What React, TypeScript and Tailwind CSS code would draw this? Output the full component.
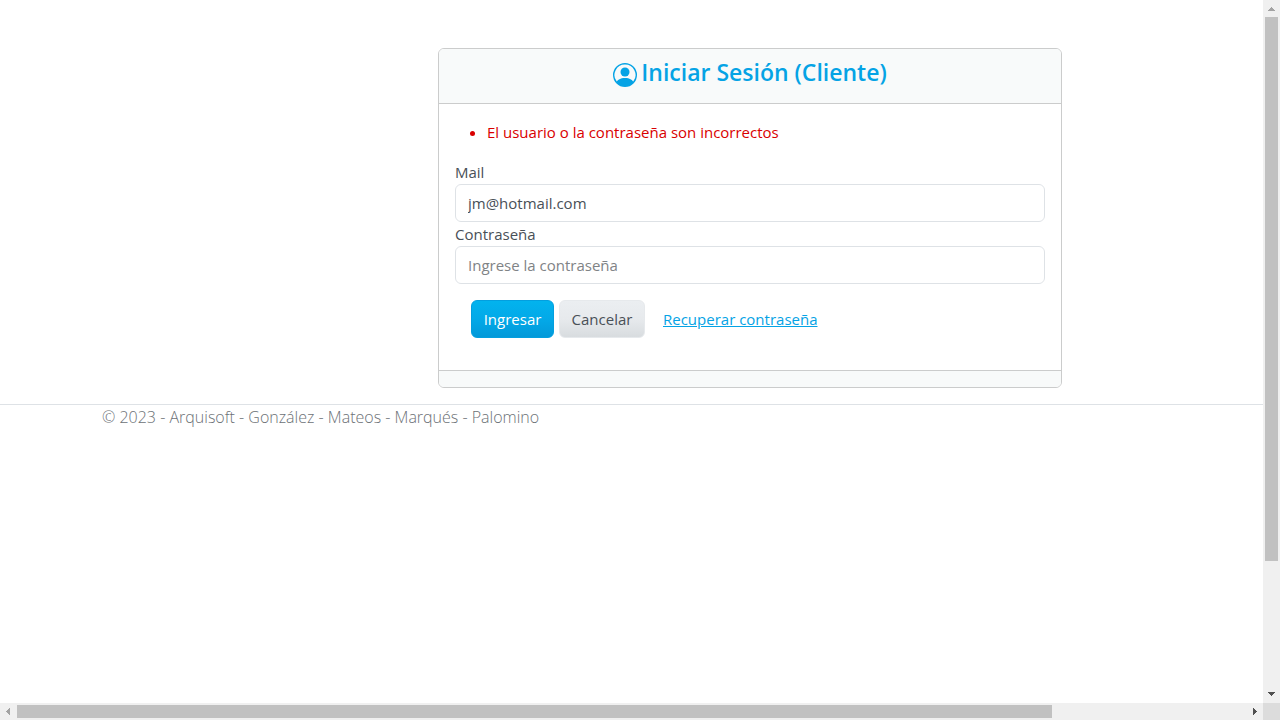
import { useState } from "react";

function PersonCircle() {
  return (
    <svg className="mt-1 size-6 shrink-0" viewBox="0 0 16 16" fill="currentColor" aria-hidden="true">
      <path d="M11 6a3 3 0 1 1-6 0 3 3 0 0 1 6 0" />
      <path
        fillRule="evenodd"
        d="M0 8a8 8 0 1 1 16 0A8 8 0 0 1 0 8m8-7a7 7 0 0 0-5.468 11.37C3.242 11.226 4.805 10 8 10s4.757 1.225 5.468 2.37A7 7 0 0 0 8 1"
      />
    </svg>
  );
}

function LoginCard() {
  const [mail, setMail] = useState("jm@hotmail.com");
  const field =
    "block h-[38px] w-full rounded-md border border-[#dee2e6] bg-white px-3 text-[15px] text-[#495057] outline-none placeholder:text-[#7f8386]";

  return (
    <section className="w-full max-w-[624px] overflow-hidden rounded-md border border-[#cbcccc] bg-white">
      <header className="h-[55px] border-b border-[#cbcccc] bg-[#f8fafa] pt-2.5">
        <h1 className="flex justify-center gap-1 text-[23px] leading-[26px] font-semibold text-[#05a3e5]">
          <PersonCircle />
          Iniciar Sesión (Cliente)
        </h1>
      </header>
      <form className="p-4" onSubmit={(e) => e.preventDefault()}>
        <ul className="mb-4 list-disc pl-8 text-[#d90000]">
          <li>El usuario o la contraseña son incorrectos</li>
        </ul>
        <label htmlFor="mail" className="block">Mail</label>
        <input id="mail" type="text" value={mail} onChange={(e) => setMail(e.target.value)} className={field} />
        <label htmlFor="password" className="block">Contraseña</label>
        <input id="password" type="password" placeholder="Ingrese la contraseña" className={field} />
        <div className="flex items-center p-4">
          <button
            type="submit"
            className="h-[38px] w-[83px] rounded-md border border-[#039fdf] bg-linear-to-b from-[#02b3ee] via-[#03a9e8] to-[#0399d9] text-white"
          >
            Ingresar
          </button>
          <button
            type="button"
            className="ml-[5px] h-[38px] w-[86px] rounded-md border border-[#e6e9ec] bg-linear-to-b from-[#ebeef1] via-[#e7eaed] to-[#d8dcdf] text-[#495057]"
          >
            Cancelar
          </button>
          <a href="#recuperar" className="ml-[18px] text-[#05a3e5] underline">
            Recuperar contraseña
          </a>
        </div>
      </form>
      <footer className="h-[17px] border-t border-[#cbcccc] bg-[#f8fafa]" />
    </section>
  );
}

function Arrow({ d, className }: { d: string; className: string }) {
  return (
    <svg className={`size-[17px] shrink-0 ${className}`} viewBox="0 0 17 17" fill="currentColor" shapeRendering="crispEdges" aria-hidden="true">
      <path d={d} />
    </svg>
  );
}

export default function App() {
  return (
    <div className="grid h-screen grid-cols-[minmax(0,1fr)_17px] grid-rows-[minmax(0,1fr)_17px] overflow-hidden bg-white font-['Open_Sans','Noto_Sans',sans-serif] text-[15px] leading-6 text-[#495057]">
      <div className="overflow-hidden">
        <main className="pt-12 pb-4 pl-[438px]">
          <LoginCard />
        </main>
        <footer className="border-t border-[#dee2e6] pl-[102px] text-base font-light text-[#6c7176]">
          © 2023 - Arquisoft - González - Mateos - Marqués - Palomino
        </footer>
      </div>
      <div className="flex flex-col bg-[#f0f0f0]">
        <Arrow className="text-[#a3a3a3]" d="M8 7h1v1h1v1h1v1h1v1H5v-1h1V9h1V8h1z" />
        <div className="flex flex-1 flex-col px-0.5">
          <div className="grow-[544] basis-0 bg-[#c1c1c1]" />
          <div className="grow-[125] basis-0" />
        </div>
        <Arrow className="text-[#505050]" d="M5 6h7v1h-1v1h-1v1H9v1H8V9H7V8H6V7H5z" />
      </div>
      <div className="flex bg-[#f0f0f0]">
        <Arrow className="text-[#a3a3a3]" d="M10 5v7H9v-1H8v-1H7V9H6V8h1V7h1V6h1V5z" />
        <div className="flex flex-1 py-0.5">
          <div className="grow-[1035] basis-0 bg-[#c1c1c1]" />
          <div className="grow-[194] basis-0" />
        </div>
        <Arrow className="text-[#505050]" d="M7 5h1v1h1v1h1v1h1v1h-1v1H9v1H8v1H7z" />
      </div>
      <div className="bg-[#dcdcdc]" />
    </div>
  );
}
